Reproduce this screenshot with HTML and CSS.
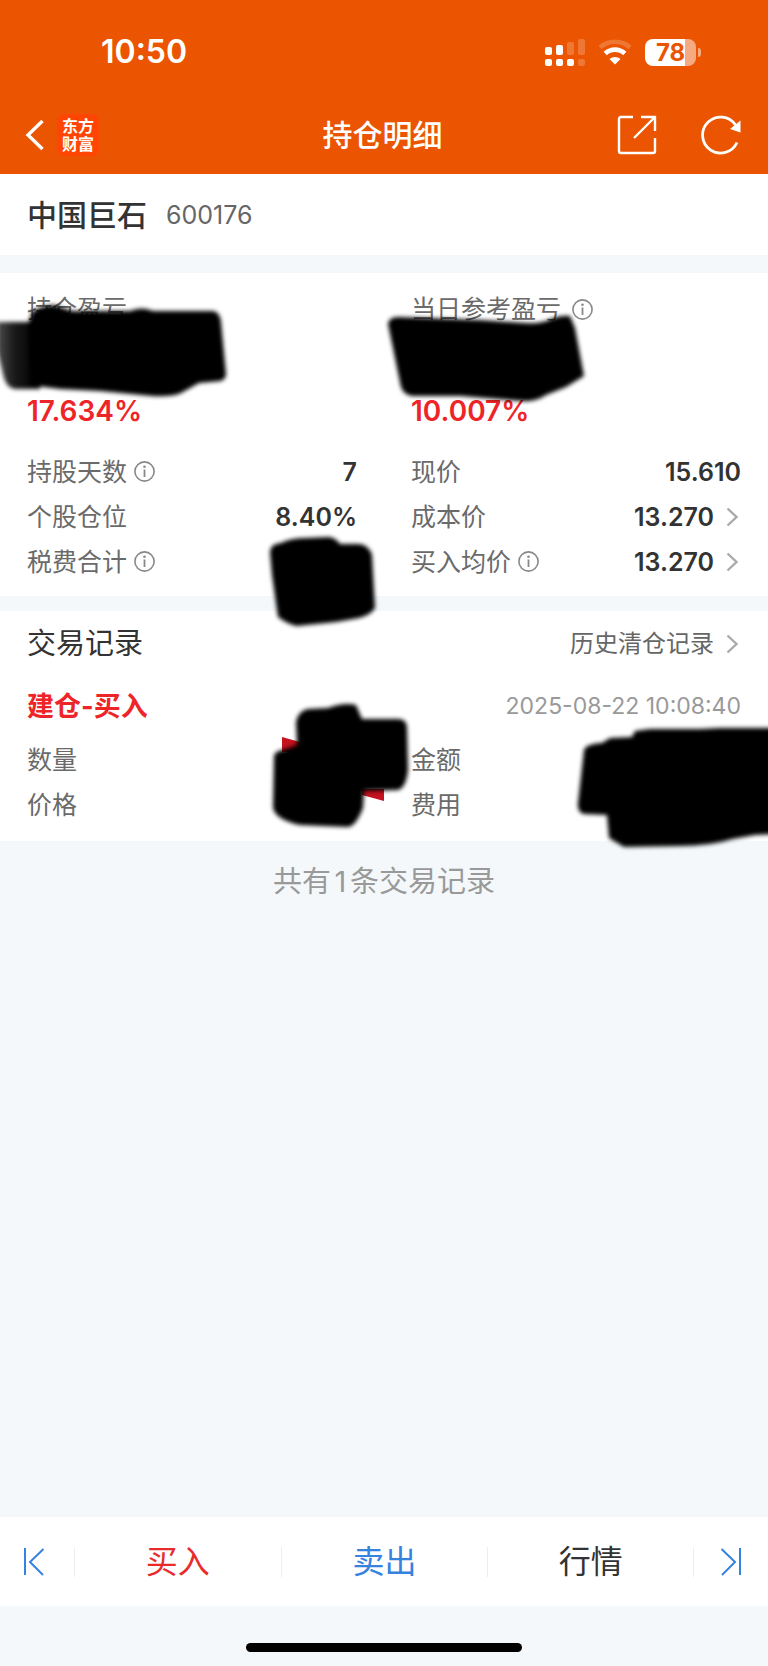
FILE: index.html
```html
<!DOCTYPE html>
<html lang="zh-CN">
<head>
<meta charset="utf-8">
<meta name="viewport" content="width=device-width, initial-scale=1">
<title>持仓明细</title>
<link rel="stylesheet" href="styles.css">
</head>
<body>
<svg class="defs" width="0" height="0" aria-hidden="true">
  <defs>
    <filter id="soft" x="-10%" y="-10%" width="120%" height="120%"><feGaussianBlur stdDeviation="2"/></filter>
    <linearGradient id="fade" x1="0" x2="1"><stop offset="0" stop-color="#000" stop-opacity=".7"/><stop offset=".4" stop-color="#000" stop-opacity=".9"/><stop offset="1" stop-color="#000"/></linearGradient>
    <symbol id="info" viewBox="0 0 21 21"><circle cx="10.500" cy="10.500" r="9.600" fill="none" stroke="currentColor" stroke-width="1.600"/><circle cx="10.500" cy="5.800" r="1.300" fill="currentColor"/><path d="M10.500 8.500v7.500" fill="none" stroke="currentColor" stroke-width="1.800"/></symbol>
    <symbol id="more" viewBox="0 0 12 20"><path d="M1.500 1.500 10.500 10 1.500 18.500" fill="none" stroke="currentColor" stroke-width="2.400"/></symbol>
  </defs>
</svg>

<header class="top">
  <div class="status">
    <time class="clock">10:50</time>
    <div class="status-icons">
      <svg width="40" height="28" viewBox="0 0 40 28" fill="#fff" aria-label="信号">
        <rect x="0" y="9" width="7" height="8" rx="2"/><rect x="11" y="7" width="7" height="10" rx="2"/>
        <rect x="22" y="4" width="7" height="13" rx="2" opacity=".2"/><rect x="33" y="1" width="7" height="16" rx="2" opacity=".2"/>
        <rect x="0" y="21" width="7" height="7" rx="2"/><rect x="11" y="21" width="7" height="7" rx="2"/><rect x="22" y="21" width="7" height="7" rx="2"/><rect x="33" y="21" width="7" height="7" rx="2" opacity=".2"/>
      </svg>
      <svg width="34" height="26" viewBox="0 0 34 26" aria-label="无线网络">
        <path d="M2 8.500C10.500.8 23.500.8 32 8.500" fill="none" stroke="#fff" stroke-width="4.500" opacity=".2"/>
        <path d="M7.200 14.500c5.600-5.200 14-5.200 19.600 0" fill="none" stroke="#fff" stroke-width="4.600"/>
        <path d="M11.500 20c3-2.700 8-2.700 11 0L17 25.500z" fill="#fff"/>
      </svg>
      <div class="battery"><span class="battery-body">78</span><span class="battery-tip"></span></div>
    </div>
  </div>
  <nav class="nav">
    <div class="nav-left">
      <button class="icon-btn" type="button" aria-label="返回"><svg width="20" height="32" viewBox="0 0 20 32"><path d="M18.500 2 4 16l14.500 14" fill="none" stroke="#fff" stroke-width="3.400"/></svg></button>
      <span class="logo">东方<br>财富</span>
    </div>
    <h1 class="title">持仓明细</h1>
    <div class="nav-right">
      <button class="icon-btn" type="button" aria-label="分享"><svg width="40" height="40" viewBox="0 0 40 40" fill="none" stroke="#fff" stroke-width="2.400"><path d="M16 2H4Q2 2 2 4v32q0 2 2 2h32q2 0 2-2V23M24 2h14v14M37.500 2.500 17 23"/></svg></button>
      <button class="icon-btn" type="button" aria-label="刷新"><svg width="40" height="40" viewBox="0 0 40 40"><path d="M36 27.500A18 18 0 1 1 34.500 10" fill="none" stroke="#fff" stroke-width="2.800"/><path d="M39.500 5.500v12L29 14z" fill="#fff"/></svg></button>
    </div>
  </nav>
</header>

<main class="content">
  <section class="stock">
    <h2 class="stock-name">中国巨石</h2><span class="stock-code">600176</span>
  </section>

  <section class="card position">
    <div class="pair">
      <div>
        <div class="label">持仓盈亏</div>
        <div class="masked">
          <svg class="mark mark-total" width="240" height="110" viewBox="0 295 240 110" aria-hidden="true"><g filter="url(#soft)"><path d="M-3 322H40L40 389H15Q7 388 4 378L-3 350Z" fill="url(#fade)"/><path d="M29 385 28 325 32 312Q40 306 54 305L72 311H130Q142 306 153 311H213Q220 312 221 322L226 374Q226 379 221 381L199 383 181 393Q172 397 152 396L100 391 60 389Z"/></g></svg>
        </div>
        <div class="percent">17.634%</div>
      </div>
      <div>
        <div class="label label-wide">当日参考盈亏<svg class="info"><use href="#info"/></svg></div>
        <div class="masked">
          <svg class="mark mark-day" width="210" height="100" viewBox="384 305 210 100" aria-hidden="true"><g filter="url(#soft)"><path d="M388 324Q389 317 398 317L480 320 525 323Q543 324 551 319 561 315 570 316L575 328 584 376 566 387 546 395Q536 402 522 401L460 396 412 396Q404 395 401 387Z"/></g></svg>
        </div>
        <div class="percent">10.007%</div>
      </div>
    </div>
    <div class="pair details">
      <dl class="rows">
        <div class="row"><dt>持股天数<svg class="info"><use href="#info"/></svg></dt><dd>7</dd></div>
        <div class="row"><dt>个股仓位</dt><dd>8.40%</dd></div>
        <div class="row"><dt>税费合计<svg class="info"><use href="#info"/></svg></dt><dd>
          <svg class="mark mark-fee" width="120" height="104" viewBox="262 530 120 104" aria-hidden="true"><g filter="url(#soft)"><path d="M269 552Q269 544 280 543 290 538 305 538L328 537Q335 538 339 544L358 544Q368 545 371 555L374 608Q370 615 358 618L335 622 296 626Q288 625 277 617L271 575Z"/></g></svg>
        </dd></div>
      </dl>
      <dl class="rows">
        <div class="row"><dt>现价</dt><dd>15.610</dd></div>
        <div class="row"><dt>成本价</dt><dd>13.270<svg class="more"><use href="#more"/></svg></dd></div>
        <div class="row"><dt>买入均价<svg class="info"><use href="#info"/></svg></dt><dd>13.270<svg class="more"><use href="#more"/></svg></dd></div>
      </dl>
    </div>
  </section>

  <section class="card records">
    <div class="records-head">
      <h2 class="records-title">交易记录</h2>
      <a class="history" href="#history">历史清仓记录<svg class="more"><use href="#more"/></svg></a>
    </div>
    <div class="trade-head">
      <h3 class="trade-type">建仓-买入</h3>
      <time class="trade-time">2025-08-22 10:08:40</time>
    </div>
    <div class="pair">
      <dl class="rows">
        <div class="row"><dt>数量</dt><dd>
          <svg class="mark mark-count" width="146" height="136" viewBox="268 697 146 136" aria-hidden="true"><path d="M282 737 300 742V752H282ZM362 789H384V801L362 795Z" fill="#c5121f"/><g filter="url(#soft)"><path d="M296 722Q298 711 308 709L328 708Q344 702 356 705L362 719H398Q407 719 407 728L408 770Q406 788 398 790L364 791 363 808Q356 826 348 827L300 825Q276 820 273 808L274 756Q275 751 283 750L297 745Z"/></g></svg>
        </dd></div>
        <div class="row"><dt>价格</dt><dd></dd></div>
      </dl>
      <dl class="rows">
        <div class="row"><dt>金额</dt><dd>
          <svg class="mark mark-amount" width="198" height="132" viewBox="570 721 198 132" aria-hidden="true"><g filter="url(#soft)"><path d="M584 750Q586 744 602 743L610 738 632 737 635 731 650 729 700 729 720 728 775 728V834L755 835 733 839Q710 846 680 846L624 847 609 838 607 815 584 814Q577 812 578 803Z"/></g></svg>
        </dd></div>
        <div class="row"><dt>费用</dt><dd></dd></div>
      </dl>
    </div>
  </section>
  <p class="summary">共有1条交易记录</p>
</main>

<footer class="bottom">
  <div class="actions">
    <button class="step step-prev" type="button" aria-label="上一个"><svg width="22" height="30" viewBox="0 0 22 30"><path d="M2 1v27M20.500 2 7 15l13 13" fill="none" stroke="currentColor" stroke-width="2"/></svg></button>
    <button class="action buy" type="button">买入</button>
    <button class="action sell" type="button">卖出</button>
    <button class="action quote" type="button">行情</button>
    <button class="step" type="button" aria-label="下一个"><svg width="22" height="30" viewBox="0 0 22 30"><path d="M20 1v27M1.500 2 15 15 2 28" fill="none" stroke="currentColor" stroke-width="2"/></svg></button>
  </div>
  <div class="home"></div>
</footer>
</body>
</html>
```
FILE: styles.css
```css
* { box-sizing: border-box; }

body {
  margin: 0;
  min-height: 100vh;
  display: flex;
  flex-direction: column;
  overflow-x: hidden;
  background: #f4f8fa;
  color: #333;
  font-family: Inter, "Noto Sans CJK SC", sans-serif;
  font-size: 25px;
  line-height: 1.2;
}

h1, h2, h3, p, dl, dd { margin: 0; }

button {
  border: 0;
  padding: 0;
  background: none;
  font: inherit;
  color: inherit;
}

svg { display: block; flex: none; }
.defs { position: absolute; }

/* Header */
.top { background: #eb5502; color: #fff; }

.status {
  display: flex;
  justify-content: space-between;
  align-items: center;
  height: 96px;
  padding: 8px 67px 0 101px;
}
.clock { font-size: 32px; font-weight: 600; line-height: 40px; }
.status-icons { display: flex; align-items: center; gap: 13px; }

.battery { display: flex; align-items: center; gap: 2px; }
.battery-body {
  width: 51px;
  height: 27px;
  border-radius: 8px;
  background: linear-gradient(to right, #fff 78%, #f5aa81 78%);
  color: #eb5502;
  font-size: 24px;
  font-weight: 700;
  line-height: 27px;
  text-align: center;
}
.battery-tip { width: 3px; height: 9px; border-radius: 0 3px 3px 0; background: #f5aa81; }

.nav {
  display: grid;
  grid-template-columns: 1fr auto 1fr;
  align-items: center;
  height: 78px;
  padding: 0 27px 0 24px;
}
.nav-left { display: flex; align-items: center; gap: 13px; }
.nav-right { display: flex; justify-content: flex-end; gap: 44px; }
.title { font-size: 30px; font-weight: 500; line-height: 40px; }

.logo {
  width: 42px;
  height: 42px;
  padding: 3px 0;
  border-radius: 8px;
  background: #ff4503;
  font-size: 16px;
  font-weight: 700;
  line-height: 18px;
  text-align: center;
}

/* Stock name */
.stock {
  display: flex;
  align-items: center;
  gap: 19px;
  height: 81px;
  padding: 0 27px;
  background: #fff;
}
.stock-name { font-size: 30px; font-weight: 500; }
.stock-code { font-size: 25px; color: #666; }

/* Cards */
.card { background: #fff; padding: 0 27px; }
.position { margin: 18px 0 15px; padding-top: 18px; padding-bottom: 12px; }
.records { padding-bottom: 14px; }

.pair { display: grid; grid-template-columns: 1fr 1fr; gap: 54px; }
.details { margin-top: 21px; }

.label, dt { display: flex; align-items: center; gap: 7px; color: #6a6a6a; font-weight: 400; }
.label { height: 36px; }
.label-wide { gap: 11px; }
.masked { position: relative; height: 65px; }
.percent { color: #ee2528; font-size: 28px; font-weight: 600; line-height: 38px; height: 36px; }

.row { display: flex; justify-content: space-between; align-items: center; height: 45px; }
.row dd { position: relative; display: flex; align-items: center; gap: 12px; font-weight: 600; }

.info { width: 21px; height: 21px; color: #888; }
.more { width: 12px; height: 20px; margin-right: 3px; color: #aaa; }

/* Scribbles that hide private figures */
.mark { position: absolute; z-index: 1; }
.mark-total { left: -27px; top: -32px; }
.mark-day { left: -27px; top: -22px; }
.mark-fee { right: -26px; top: -32px; }
.mark-count { right: -57px; top: -63px; }
.mark-amount { right: -27px; top: -39px; }

/* Trade records */
.records-head, .trade-head { display: flex; justify-content: space-between; align-items: center; }
.records-head { height: 64px; padding-top: 2px; }
.trade-head { height: 62px; padding-top: 2px; }
.records-title { font-size: 29px; font-weight: 400; }
.history { display: flex; align-items: center; gap: 12px; font-size: 24px; color: #666; text-decoration: none; }
.trade-type { font-size: 27px; font-weight: 700; color: #ee2528; }
.trade-time { font-size: 23px; color: #999; }

.summary {
  padding-top: 21px;
  color: #999;
  font-size: 29px;
  line-height: 40px;
  text-align: center;
  text-autospace: normal;
}

/* Bottom bar */
.bottom { margin-top: auto; }
.actions {
  display: grid;
  grid-template-columns: 74px 1fr 1fr 1fr 74px;
  align-items: center;
  height: 89px;
  background: #fff;
}
.action { height: 30px; border-left: 1px solid #eee; font-size: 32px; line-height: 30px; }
.quote { border-right: 1px solid #eee; }
.buy { color: #e92b2b; }
.sell { color: #3682df; }
.step { display: flex; justify-content: center; color: #3682df; }
.step-prev { padding-right: 6px; }
.home { width: 36%; height: 9px; margin: 37px auto 14px; border-radius: 5px; background: #000; }
```
